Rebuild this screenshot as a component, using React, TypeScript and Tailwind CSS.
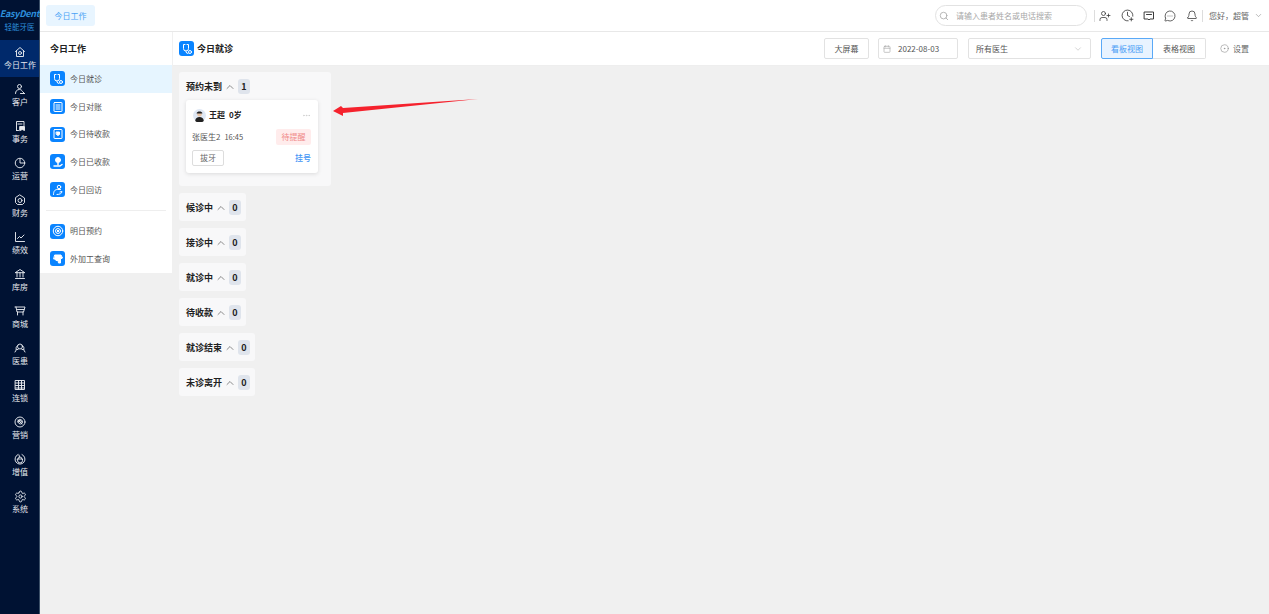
import React from "react";
import { Search, UserPlus, ClockPlus, MessageCircleMore, Bell, ChevronDown, ChevronUp, Calendar, CircleDot, Ellipsis, Settings } from "lucide-react";

const font = "font-['Noto_Sans_CJK_SC','Noto_Sans',sans-serif]";

function Glyph({ size = 12, sw = 1.9, children }: { size?: number; sw?: number; children: React.ReactNode }) {
  return (
    <svg width={size} height={size} viewBox="0 0 24 24" fill="none" stroke="currentColor" strokeWidth={sw} strokeLinecap="round" strokeLinejoin="round">
      {children}
    </svg>
  );
}

const nav: [React.ReactNode, string][] = [
  [<><path d="M3 11 12 3l9 8M5 9.5V21h14V9.5" /><circle cx="12" cy="14" r="3" /></>, "今日工作"],
  [<><circle cx="11" cy="7" r="4" /><path d="M3 21c0-5 3-8 8-8 3 0 5 2 6 4l4 4M13 21h8" /></>, "客户"],
  [<><path d="M5 21V3h15v8M5 21h4M8 8h8" /><path d="M12 13h9v8l-4.5-2-4.5 2z" fill="currentColor" /></>, "事务"],
  [<><circle cx="12" cy="12" r="9.5" /><path d="M12 4v8h8" /></>, "运营"],
  [<><path d="M12 2 21 8v9l-4 4H7l-4-4V8z" /><circle cx="12" cy="13" r="4" /></>, "财务"],
  [<path d="M3 3v18h18M7 15l4-4 3 3 6-6" />, "绩效"],
  [<path d="M3 9l9-6 9 6zM6 9v9M12 9v9M18 9v9M3 21h18" />, "库房"],
  [<path d="M2 4h20l-3 10H6L4 4M7 14v6M18 14v6M7 9h13" />, "商城"],
  [<><circle cx="12" cy="9" r="5" /><path d="M4 15a8 8 0 0 1 3-8M20 15a8 8 0 0 0-3-8M2 20l3-5h3M22 20l-3-5h-3" /></>, "医患"],
  [<><rect x="3" y="3" width="18" height="18" /><path d="M3 8h18M3 13h18M3 18h18M9 3v18M15 3v18" /></>, "连锁"],
  [<><circle cx="12" cy="12" r="10" /><path d="M7 12a5 5 0 0 1 10 0 4 4 0 0 1-8 0 3 3 0 0 1 6 0M8 8l8 8" /></>, "营销"],
  [<><path d="M8 3a10 10 0 1 0 8 0" /><path d="M7 12h10v3a5 5 0 0 1-10 0zM8 12a4 4 0 0 1 8 0M11 8l-1-4" /></>, "增值"],
  [<></>, "系统"],
];

const B = ({ children }: { children: React.ReactNode }) => (
  <span className="flex h-[15px] w-[15px] items-center justify-center rounded-[3px] bg-[#0a84ff] text-white">
    <Glyph size={12} sw={2}>{children}</Glyph>
  </span>
);

const scope = <><path d="M8 3H5v8a5 5 0 0 0 10 0V3h-3" /><path d="M10 16v1a4 4 0 0 0 4 4" /><circle cx="18" cy="18" r="3" /></>;

const menu: [React.ReactNode, string][] = [
  [scope, "今日就诊"],
  [<><rect x="4" y="3" width="16" height="18" rx="1" /><path d="M8 8h8M8 12h8M8 16h8" /></>, "今日对账"],
  [<><rect x="4" y="3" width="16" height="18" rx="1" /><path d="M9 8h6v5l-3 2-3-2z" fill="currentColor" /></>, "今日待收款"],
  [<><circle cx="12" cy="8" r="5" fill="currentColor" /><path d="M12 14v3M4 20h12l4-3" strokeWidth="3" /></>, "今日已收款"],
  [<><circle cx="14" cy="6" r="3.5" /><path d="M3 21c0-7 3-10 8-10h6M10 21c5 0 10-2 10-6l-4 1" /></>, "今日回访"],
];

const menu2: [React.ReactNode, string][] = [
  [<><circle cx="12" cy="12" r="9.5" /><circle cx="12" cy="12" r="5" /><path d="M10 10l4 4M14 10l-4 4" /></>, "明日预约"],
  [<path d="M6 4h12l3 6-4 2v8h-4l-1-5H8l-2-3H4z" fill="currentColor" />, "外加工查询"],
];

const columns = [["候诊中", 67], ["接诊中", 67], ["就诊中", 67], ["待收款", 67], ["就诊结束", 76], ["未诊离开", 76]] as const;

function ColumnHead({ title, count }: { title: string; count: number }) {
  return (
    <div className="flex h-[15px] items-center whitespace-nowrap">
      <span className="text-[9px] font-semibold text-[#222]">{title}</span>
      <ChevronUp size={12} strokeWidth={1.5} className="ml-[2px] shrink-0 text-[#666]" />
      <span className="ml-[2px] flex h-[15px] w-[12px] shrink-0 items-center justify-center rounded-[3px] bg-[#dfe4ec] text-[9px] font-bold text-[#222]">
        {count}
      </span>
    </div>
  );
}

export default function App() {
  return (
    <div className={`${font} flex h-[614px] w-[1269px] overflow-hidden bg-[#f0f0f0]`}>
      <aside className="flex w-[40px] shrink-0 flex-col border-r border-[#3c5068] bg-[#001233]">
        <div className="flex h-[40px] flex-col items-center pt-[7px]">
          <span className="whitespace-nowrap text-[9px] font-semibold italic leading-[13px] tracking-[-0.3px] text-[#2d8fdc]">EasyDent</span>
          <span className="mt-[2px] text-[7.5px] leading-[9px] text-[#2d8fdc]">轻能牙医</span>
        </div>
        {nav.map(([icon, label], i) => (
          <div key={label} className={`flex h-[37px] flex-col items-center pl-px pt-[6px] text-[#e6e9ee] ${i === 0 ? "bg-[#00296b]" : ""}`}>
            {label === "系统" ? <Settings size={13} strokeWidth={1.7} /> : <Glyph>{icon}</Glyph>}
            <span className={`text-[8px] leading-[13px] ${label === "系统" ? "-mt-px" : ""}`}>{label}</span>
          </div>
        ))}
      </aside>

      <div className="flex min-w-0 flex-1 flex-col">
        <header className="flex h-[32px] shrink-0 items-center border-b border-[#e8e8e8] bg-white pl-[6px] pr-[6px]">
          <div className="flex h-[21px] w-[49px] items-center justify-center rounded-[3px] bg-[#e8f5ff] text-[8px] text-[#4aa3f5]">今日工作</div>
          <div className="ml-auto flex h-[21px] w-[152px] items-center rounded-full border border-[#e2e2e2] pl-[3px]">
            <Search size={10} className="text-[#aaa]" />
            <span className="ml-[7px] text-[8px] text-[#a8a8a8]">请输入患者姓名或电话搜索</span>
          </div>
          <span className="ml-[7px] h-[12px] w-px bg-[#ddd]" />
          <UserPlus size={12} strokeWidth={1.5} className="ml-[4px] text-[#333]" />
          <ClockPlus size={13} strokeWidth={1.5} className="ml-[10px] text-[#333]" />
          <span className="ml-[9px] text-[#333]">
            <Glyph size={12} sw={1.9}><path d="M3 4h18v14h-7l-2 2-2-2H3zM7 9h10" /></Glyph>
          </span>
          <MessageCircleMore size={12} strokeWidth={1.5} className="ml-[9px] text-[#333]" />
          <Bell size={12} strokeWidth={1.5} className="ml-[10px] text-[#333]" />
          <span className="ml-[4px] h-[12px] w-px bg-[#ddd]" />
          <span className="ml-[6px] whitespace-nowrap text-[8px] text-[#666]">您好，超管</span>
          <ChevronDown size={9} strokeWidth={1.3} className="ml-[5px] text-[#777]" />
        </header>

        <div className="flex min-h-0 flex-1">
          <div className="w-[132px] shrink-0">
            <nav className="bg-white">
              <div className="flex h-[33px] items-center pl-[10px] text-[9px] font-semibold text-[#222]">今日工作</div>
              {menu.map(([icon, label], i) => (
                <div key={label} className={`flex h-[27.7px] items-center pl-[10px] ${i === 0 ? "bg-[#e6f5ff]" : ""}`}>
                  <B>{icon}</B>
                  <span className="ml-[5px] text-[8px] text-[#555]">{label}</span>
                </div>
              ))}
              <div className="mx-[6px] mb-[6px] mt-[7px] h-px bg-[#eee]" />
              {menu2.map(([icon, label]) => (
                <div key={label} className="flex h-[27.7px] items-center pl-[10px]">
                  <B>{icon}</B>
                  <span className="ml-[5px] text-[8px] text-[#555]">{label}</span>
                </div>
              ))}
            </nav>
          </div>

          <main className="flex min-w-0 flex-1 flex-col pl-[1px]">
            <div className="flex h-[34px] shrink-0 items-center border-b border-[#eee] bg-white pl-[6px] pr-[20px]">
              <B>{scope}</B>
              <span className="ml-[3px] text-[9px] font-semibold text-[#222]">今日就诊</span>
              <div className="ml-auto flex h-[21px] w-[45px] items-center justify-center rounded-[2px] border border-[#e2e2e2] text-[8px] text-[#555]">大屏幕</div>
              <div className="ml-[9px] flex h-[21px] w-[80px] items-center rounded-[2px] border border-[#e2e2e2] pl-[4px]">
                <Calendar size={8} className="text-[#aaa]" />
                <span className="ml-[7px] text-[8px] text-[#555]">2022-08-03</span>
              </div>
              <div className="ml-[10px] flex h-[21px] w-[123px] items-center justify-between rounded-[2px] border border-[#e2e2e2] px-[7px]">
                <span className="text-[8px] text-[#555]">所有医生</span>
                <ChevronDown size={10} strokeWidth={1.2} className="text-[#aaa]" />
              </div>
              <div className="ml-[10px] flex h-[21px] w-[52px] items-center justify-center rounded-l-[2px] border border-[#5aa9f7] bg-[#e8f3ff] text-[8px] text-[#4a9df5]">看板视图</div>
              <div className="flex h-[21px] w-[53px] items-center justify-center rounded-r-[2px] border border-l-0 border-[#e2e2e2] text-[8px] text-[#555]">表格视图</div>
              <CircleDot size={9} strokeWidth={1.3} className="ml-[14px] text-[#777]" />
              <span className="ml-[4px] text-[8px] text-[#666]">设置</span>
            </div>

            <div className="relative flex flex-1 flex-col items-start gap-[7px] pl-[6px] pt-[6px]">
              <section className="h-[114px] w-[152px] rounded-[3px] bg-[#f8f8f9] px-[7px] pt-[7px]">
                <ColumnHead title="预约未到" count={1} />
                <div className="mt-[6px] h-[73px] w-[132px] rounded-[3px] bg-white pl-[6px] pr-[7px] pt-[8px] shadow-[0_1px_4px_rgba(0,0,0,0.12)]">
                  <div className="flex h-[14px] items-center pl-[1px]">
                    <svg width="13" height="13" viewBox="0 0 13 13">
                      <circle cx="6.5" cy="6.5" r="6.5" fill="#dfe8f5" />
                      <circle cx="6.5" cy="5.2" r="2.3" fill="#e8c4a8" />
                      <path d="M3.6 4.4C4 2 9 2 9.4 4.4z" fill="#222" />
                      <path d="M2.2 12c.3-3 2-4 4.3-4s4 1 4.3 4a6.5 6.5 0 0 1-8.6 0z" fill="#222" />
                    </svg>
                    <span className="ml-[3px] text-[8px] font-semibold text-[#222]">王超</span>
                    <span className="ml-[4px] text-[8px] font-semibold text-[#222]">0岁</span>
                    <Ellipsis size={9} className="ml-auto text-[#ccc]" />
                  </div>
                  <div className="mt-[7px] flex h-[16px] items-center">
                    <span className="text-[8px] text-[#555]">张医生2</span>
                    <span className="ml-[4px] text-[7.5px] text-[#555]">16:45</span>
                    <span className="ml-auto flex h-[16px] w-[35px] items-center justify-center rounded-[2px] bg-[#ffecec] text-[8px] text-[#f08a8a]">待提醒</span>
                  </div>
                  <div className="mt-[5px] flex h-[16px] items-center justify-between">
                    <span className="flex h-[16px] w-[32px] items-center justify-center rounded-[2px] border border-[#ddd] text-[8px] text-[#666]">拔牙</span>
                    <span className="text-[8px] font-medium text-[#3f95f5]">挂号</span>
                  </div>
                </div>
              </section>
              {columns.map(([title, w]) => (
                <section key={title} style={{ width: w }} className="h-[28px] rounded-[3px] bg-[#f8f8f9] px-[7px] pt-[7px]">
                  <ColumnHead title={title} count={0} />
                </section>
              ))}
              <svg className="absolute left-[160px] top-[33px]" width="148" height="18" viewBox="0 0 148 18">
                <polygon points="0,12 8,7 10,9 145,0 10,14 10,17" fill="#f5222d" />
              </svg>
            </div>
          </main>
        </div>
      </div>
    </div>
  );
}
